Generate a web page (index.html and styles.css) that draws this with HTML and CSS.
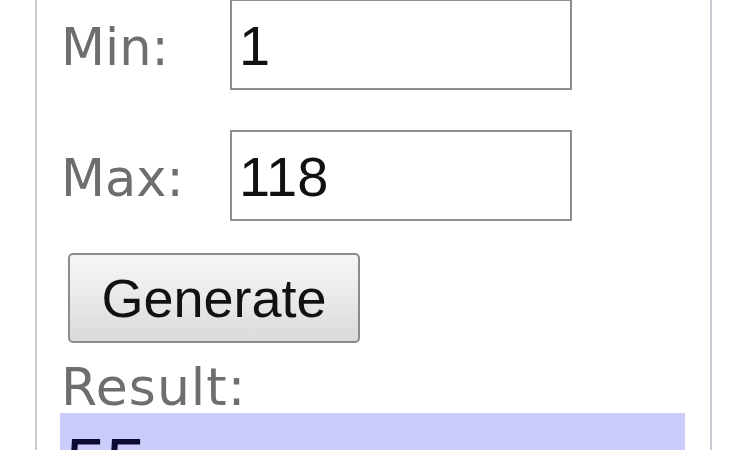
FILE: index.html
```html
<!DOCTYPE html>
<html>
<head>
<meta charset="utf-8">
<link rel="stylesheet" href="styles.css">
</head>
<body>
<div class="panel">
  <div class="fields">
    <label class="lbl lbl-min" for="min">Min:</label>
    <input class="field" id="min" type="text" value="1">
    <label class="lbl lbl-max" for="max">Max:</label>
    <input class="field" id="max" type="text" value="118">
  </div>
  <button class="btn" type="button">Generate</button>
  <div class="result-label">Result:</div>
  <div class="result">55</div>
</div>
</body>
</html>
```

FILE: styles.css
```css
html, body {
  margin: 0;
  padding: 0;
  background: #ffffff;
  overflow: hidden;
}

.panel {
  margin: -41px 0 0 35px;
  width: 652px;
  height: 520px;
  border: 2px solid #cacad2;
  padding: 38px 0 0 21px;
  box-sizing: content-box;
}

.fields {
  display: grid;
  grid-template-columns: 172px 342px;
  grid-auto-rows: 91px;
  row-gap: 40px;
  align-items: center;
}

.lbl {
  font-family: "DejaVu Sans", Verdana, sans-serif;
  font-size: 51px;
  color: #6e6e6e;
  padding: 5px 0 0 3px;
}

.field {
  box-sizing: border-box;
  width: 342px;
  height: 91px;
  margin: 0;
  border: 2px solid #8e8e8e;
  padding: 2px 3px 0 7px;
  font-family: "Liberation Sans", Arial, sans-serif;
  font-size: 56px;
  color: #111111;
  background: #ffffff;
  outline: none;
}

.btn {
  display: block;
  box-sizing: border-box;
  margin: 32px 0 0 10px;
  width: 292px;
  height: 90px;
  border: 2px solid #8c8c8c;
  border-radius: 5px;
  background: linear-gradient(#f6f6f6, #e9e9e9 50%, #dadada);
  font-family: "Liberation Sans", Arial, sans-serif;
  font-size: 54px;
  color: #111111;
  padding: 0;
}

.result-label {
  margin-top: 18px;
  padding-left: 3px;
  font-family: "DejaVu Sans", Verdana, sans-serif;
  font-size: 52px;
  letter-spacing: 1px;
  line-height: 52px;
  color: #6e6e6e;
}

.result {
  margin-left: 2px;
  width: 625px;
  height: 120px;
  box-sizing: border-box;
  background: #ccccfa;
  padding: 10px 0 0 6px;
  font-family: "Liberation Sans", Arial, sans-serif;
  font-size: 72px;
  color: #0a0a33;
}
```
